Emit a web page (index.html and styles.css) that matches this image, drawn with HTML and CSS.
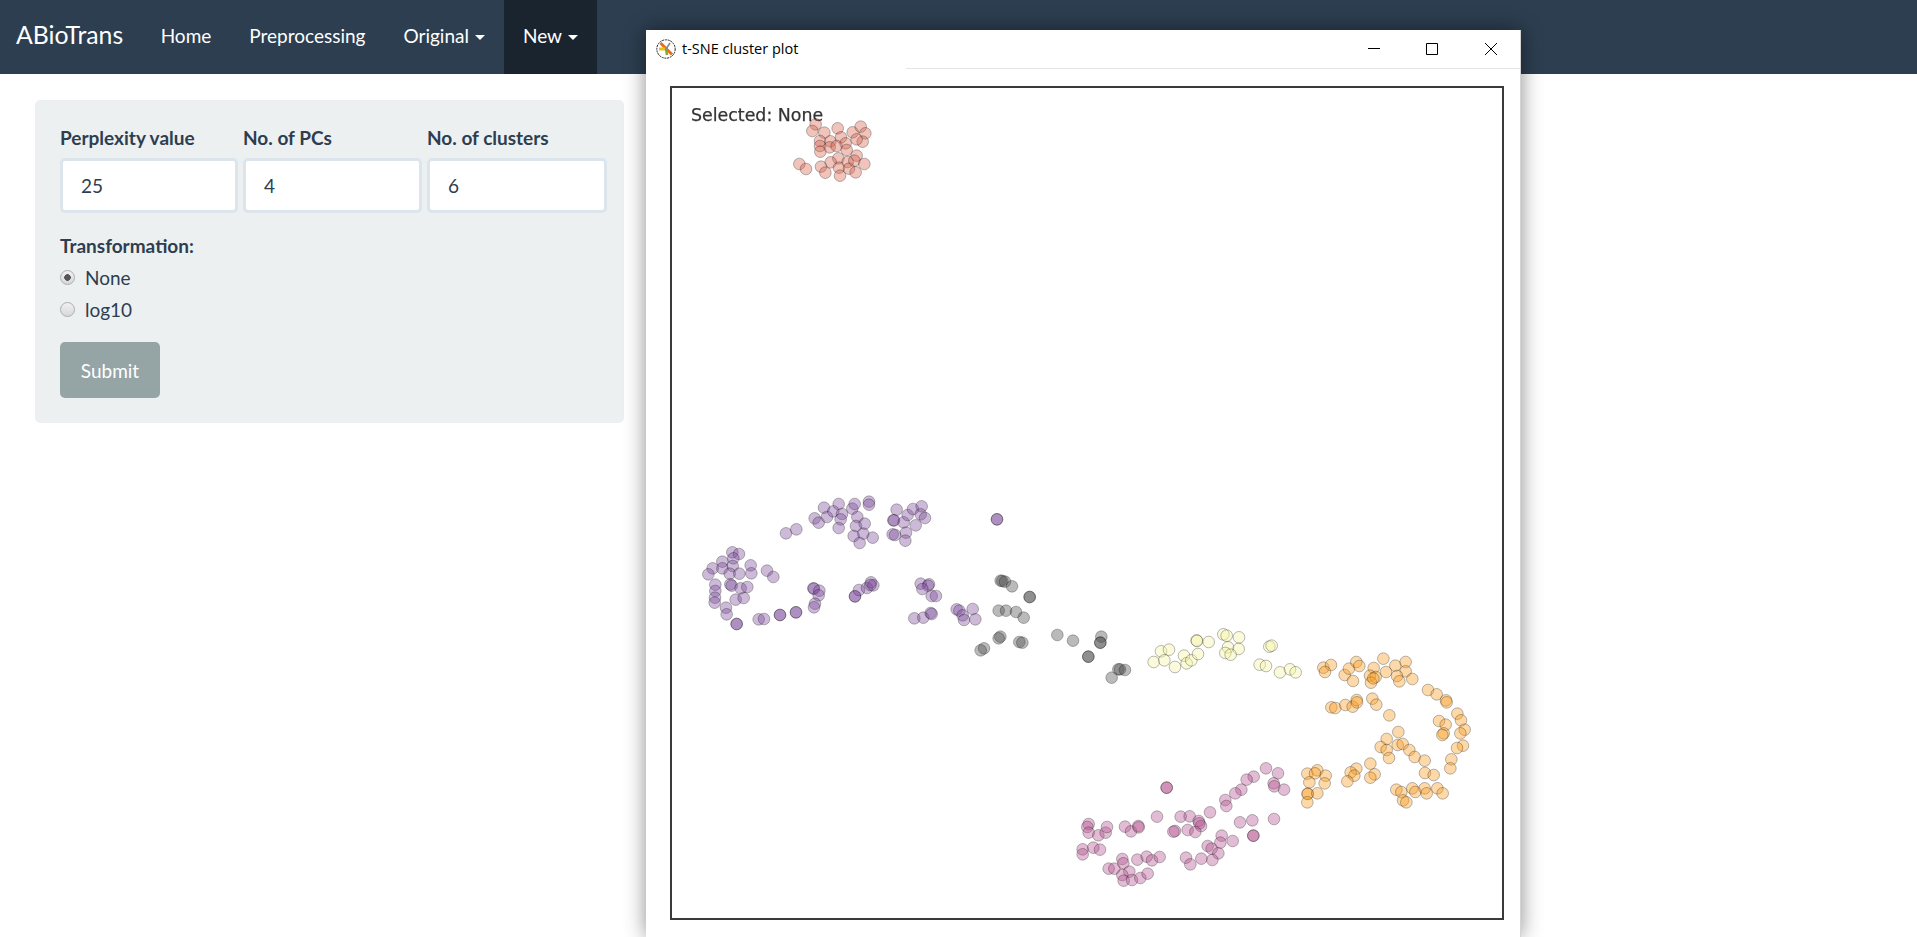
FILE: index.html
```html
<!DOCTYPE html>
<html lang="en">
<head>
<meta charset="utf-8">
<title>ABioTrans</title>
<link rel="stylesheet" href="styles.css">
</head>
<body>
<nav class="navbar">
  <a class="brand">ABioTrans</a>
  <a class="nav-item">Home</a>
  <a class="nav-item">Preprocessing</a>
  <a class="nav-item">Original<span class="caret"></span></a>
  <a class="nav-item active">New<span class="caret"></span></a>
</nav>
<main class="panel">
  <div class="fields">
    <label class="field"><span class="field-label">Perplexity value</span><input class="field-input" value="25"></label>
    <label class="field"><span class="field-label">No. of PCs</span><input class="field-input" value="4"></label>
    <label class="field"><span class="field-label">No. of clusters</span><input class="field-input" value="6"></label>
  </div>
  <div class="field-label group-title">Transformation:</div>
  <label class="radio"><input type="radio" name="t" checked>None</label>
  <label class="radio"><input type="radio" name="t">log10</label>
  <button class="submit" type="button">Submit</button>
</main>
<section class="window">
  <header class="titlebar">
    <div class="title">
      <svg class="app-icon" width="20" height="20" viewBox="0 0 20 20">
        <circle cx="10" cy="10" r="9.2" fill="#fff" stroke="#222" stroke-width="1" stroke-dasharray="2 .8"/>
        <path d="M4.5 4 10 9.5l6 6" fill="none" stroke="#e8701a" stroke-width="3"/>
        <path d="M3 10h6" stroke="#e8c020" stroke-width="3"/>
        <path d="M10 10l1 6" stroke="#7aa83c" stroke-width="2.4"/>
        <path d="M10 10l4-6" stroke="#888" stroke-width="1.6"/>
      </svg>
      <span>t-SNE cluster plot</span>
    </div>
    <div class="controls">
      <button class="ctl" type="button"><svg width="12" height="12" viewBox="0 0 12 12"><path d="M0 5.5h12" stroke="#000"/></svg></button>
      <button class="ctl" type="button"><svg width="12" height="12" viewBox="0 0 12 12"><path d="M.5.5h11v11H.5z" fill="none" stroke="#000"/></svg></button>
      <button class="ctl" type="button"><svg width="12" height="12" viewBox="0 0 12 12"><path d="M0 0l12 12M12 0 0 12" stroke="#000"/></svg></button>
    </div>
  </header>
  <div class="window-body">
    <svg class="plot" viewBox="672 88 830 830">
      <text class="selected" x="691" y="120.500">Selected: None</text>
      <g class="dots red" transform="translate(640 20) scale(.33333)">
        <circle cx="527" cy="313"/><circle cx="517" cy="333"/><circle cx="553" cy="338"/><circle cx="593" cy="325"/><circle cx="540" cy="363"/><circle cx="571" cy="364"/><circle cx="603" cy="352"/><circle cx="540" cy="378"/><circle cx="541" cy="395"/><circle cx="569" cy="382"/><circle cx="590" cy="378"/><circle cx="617" cy="370"/><circle cx="620" cy="390"/><circle cx="638" cy="337"/><circle cx="662" cy="320"/><circle cx="676" cy="340"/><circle cx="668" cy="365"/><circle cx="650" cy="358"/><circle cx="650" cy="407"/><circle cx="595" cy="415"/><circle cx="572" cy="427"/><circle cx="543" cy="440"/><circle cx="556" cy="458"/><circle cx="597" cy="443"/><circle cx="600" cy="467"/><circle cx="623" cy="426"/><circle cx="627" cy="446"/><circle cx="647" cy="457"/><circle cx="643" cy="422"/><circle cx="673" cy="432"/><circle cx="478" cy="432"/><circle cx="498" cy="447"/>
      </g>
      <g class="dots purple" transform="translate(690 490) scale(.33333)">
        <circle cx="288" cy="130"/><circle cx="319" cy="118"/><circle cx="374" cy="85"/><circle cx="386" cy="98"/><circle cx="402" cy="53"/><circle cx="411" cy="81"/><circle cx="430" cy="64"/><circle cx="446" cy="42"/><circle cx="456" cy="72"/><circle cx="452" cy="88"/><circle cx="446" cy="114"/><circle cx="487" cy="56"/><circle cx="494" cy="42"/><circle cx="537" cy="35"/><circle cx="537" cy="44"/><circle cx="502" cy="81"/><circle cx="498" cy="108"/><circle cx="524" cy="101"/><circle cx="491" cy="138"/><circle cx="520" cy="131"/><circle cx="509" cy="159"/><circle cx="548" cy="143"/><circle cx="620" cy="59"/><circle cx="610" cy="91"/><circle cx="612" cy="91"/><circle cx="641" cy="97"/><circle cx="653" cy="75"/><circle cx="669" cy="57"/><circle cx="695" cy="49"/><circle cx="692" cy="73"/><circle cx="705" cy="84"/><circle cx="677" cy="106"/><circle cx="608" cy="133"/><circle cx="615" cy="135"/><circle cx="648" cy="128"/><circle cx="646" cy="152"/>
        <circle cx="127" cy="187"/><circle cx="147" cy="192"/><circle cx="130" cy="205"/><circle cx="128" cy="228"/><circle cx="97" cy="215"/><circle cx="97" cy="235"/><circle cx="68" cy="235"/><circle cx="55" cy="253"/><circle cx="119" cy="251"/><circle cx="148" cy="251"/><circle cx="182" cy="226"/><circle cx="184" cy="250"/><circle cx="231" cy="242"/><circle cx="250" cy="261"/><circle cx="76" cy="284"/><circle cx="76" cy="303"/><circle cx="75" cy="323"/><circle cx="74" cy="338"/><circle cx="121" cy="283"/><circle cx="125" cy="287"/><circle cx="152" cy="295"/><circle cx="172" cy="291"/><circle cx="137" cy="329"/><circle cx="161" cy="324"/><circle cx="108" cy="353"/><circle cx="110" cy="373"/><circle cx="140" cy="402"/><circle cx="140" cy="402"/><circle cx="206" cy="388"/><circle cx="222" cy="387"/><circle cx="270" cy="375"/><circle cx="270" cy="375"/><circle cx="318" cy="367"/><circle cx="318" cy="367"/>
        <circle cx="370" cy="295"/><circle cx="372" cy="296"/><circle cx="388" cy="302"/><circle cx="386" cy="316"/><circle cx="375" cy="341"/><circle cx="372" cy="352"/><circle cx="495" cy="319"/><circle cx="495" cy="319"/><circle cx="507" cy="300"/><circle cx="531" cy="294"/><circle cx="543" cy="277"/><circle cx="550" cy="286"/><circle cx="541" cy="285"/>
        <circle cx="692" cy="281"/><circle cx="717" cy="283"/><circle cx="714" cy="287"/><circle cx="697" cy="297"/><circle cx="725" cy="318"/><circle cx="738" cy="318"/><circle cx="673" cy="385"/><circle cx="700" cy="383"/><circle cx="722" cy="369"/><circle cx="725" cy="372"/><circle cx="800" cy="358"/><circle cx="808" cy="362"/><circle cx="848" cy="357"/><circle cx="818" cy="376"/><circle cx="822" cy="390"/><circle cx="856" cy="388"/><circle cx="921" cy="88"/><circle cx="921" cy="88"/>
      </g>
      <g class="dots gray" transform="translate(960 490) scale(.33333)">
        <circle cx="122" cy="272"/><circle cx="127" cy="273"/><circle cx="135" cy="275"/><circle cx="156" cy="289"/><circle cx="209" cy="321"/><circle cx="209" cy="321"/><circle cx="116" cy="362"/><circle cx="138" cy="362"/><circle cx="168" cy="366"/><circle cx="191" cy="383"/><circle cx="121" cy="440"/><circle cx="116" cy="445"/><circle cx="72" cy="475"/><circle cx="62" cy="481"/><circle cx="178" cy="456"/><circle cx="187" cy="458"/><circle cx="292" cy="435"/><circle cx="339" cy="452"/><circle cx="424" cy="440"/><circle cx="421" cy="458"/><circle cx="421" cy="458"/><circle cx="385" cy="500"/><circle cx="385" cy="500"/><circle cx="475" cy="538"/><circle cx="480" cy="538"/><circle cx="495" cy="540"/><circle cx="455" cy="563"/>
      </g>
      <g class="dots yellow" transform="translate(960 490) scale(.33333)">
        <circle cx="581" cy="516"/><circle cx="603" cy="484"/><circle cx="627" cy="479"/><circle cx="613" cy="511"/><circle cx="645" cy="531"/><circle cx="672" cy="497"/><circle cx="680" cy="520"/><circle cx="694" cy="511"/><circle cx="714" cy="492"/><circle cx="710" cy="451"/><circle cx="711" cy="453"/><circle cx="746" cy="456"/><circle cx="790" cy="433"/><circle cx="800" cy="437"/><circle cx="837" cy="442"/><circle cx="804" cy="472"/><circle cx="836" cy="477"/><circle cx="796" cy="489"/><circle cx="812" cy="494"/><circle cx="928" cy="470"/><circle cx="935" cy="467"/><circle cx="899" cy="524"/><circle cx="918" cy="528"/><circle cx="960" cy="547"/><circle cx="990" cy="538"/><circle cx="1007" cy="547"/>
      </g>
      <g class="dots orange" transform="translate(1230 620) scale(.33333)">
        <circle cx="280" cy="143"/><circle cx="303" cy="135"/><circle cx="285" cy="156"/><circle cx="344" cy="165"/><circle cx="357" cy="146"/><circle cx="379" cy="126"/><circle cx="388" cy="138"/><circle cx="369" cy="183"/><circle cx="431" cy="144"/><circle cx="420" cy="167"/><circle cx="437" cy="171"/><circle cx="423" cy="188"/><circle cx="430" cy="175"/><circle cx="460" cy="116"/><circle cx="468" cy="156"/><circle cx="496" cy="137"/><circle cx="527" cy="126"/><circle cx="527" cy="154"/><circle cx="501" cy="168"/><circle cx="508" cy="184"/><circle cx="547" cy="177"/><circle cx="594" cy="210"/><circle cx="620" cy="223"/><circle cx="648" cy="241"/><circle cx="650" cy="247"/><circle cx="682" cy="281"/><circle cx="693" cy="301"/><circle cx="704" cy="329"/><circle cx="691" cy="340"/><circle cx="627" cy="303"/><circle cx="647" cy="314"/><circle cx="641" cy="340"/><circle cx="637" cy="345"/><circle cx="699" cy="377"/><circle cx="681" cy="384"/><circle cx="664" cy="418"/><circle cx="661" cy="445"/>
        <circle cx="304" cy="262"/><circle cx="316" cy="264"/><circle cx="346" cy="255"/><circle cx="368" cy="260"/><circle cx="380" cy="240"/><circle cx="381" cy="247"/><circle cx="427" cy="236"/><circle cx="439" cy="254"/><circle cx="478" cy="286"/><circle cx="505" cy="336"/><circle cx="470" cy="357"/><circle cx="452" cy="381"/><circle cx="470" cy="390"/><circle cx="477" cy="414"/><circle cx="503" cy="375"/><circle cx="518" cy="372"/><circle cx="538" cy="390"/><circle cx="554" cy="411"/><circle cx="584" cy="422"/><circle cx="585" cy="459"/><circle cx="611" cy="465"/>
        <circle cx="421" cy="431"/><circle cx="434" cy="463"/><circle cx="421" cy="473"/><circle cx="379" cy="446"/><circle cx="362" cy="457"/><circle cx="373" cy="467"/><circle cx="352" cy="484"/><circle cx="499" cy="509"/><circle cx="514" cy="516"/><circle cx="519" cy="541"/><circle cx="529" cy="547"/><circle cx="547" cy="505"/><circle cx="556" cy="516"/><circle cx="584" cy="505"/><circle cx="590" cy="520"/><circle cx="622" cy="505"/><circle cx="638" cy="520"/><circle cx="232" cy="461"/><circle cx="262" cy="451"/><circle cx="255" cy="460"/><circle cx="287" cy="467"/><circle cx="284" cy="490"/><circle cx="238" cy="487"/><circle cx="233" cy="521"/><circle cx="233" cy="522"/><circle cx="262" cy="520"/><circle cx="232" cy="547"/>
      </g>
      <g class="dots mauve" transform="translate(1060 760) scale(.33333)">
        <circle cx="618" cy="25"/><circle cx="654" cy="40"/><circle cx="581" cy="50"/><circle cx="560" cy="59"/><circle cx="641" cy="70"/><circle cx="643" cy="79"/><circle cx="672" cy="89"/><circle cx="544" cy="89"/><circle cx="526" cy="100"/><circle cx="496" cy="120"/><circle cx="499" cy="138"/><circle cx="450" cy="157"/><circle cx="291" cy="170"/><circle cx="362" cy="170"/><circle cx="389" cy="169"/><circle cx="416" cy="183"/><circle cx="423" cy="198"/><circle cx="418" cy="190"/><circle cx="345" cy="213"/><circle cx="340" cy="215"/><circle cx="383" cy="210"/><circle cx="406" cy="216"/><circle cx="540" cy="187"/><circle cx="577" cy="181"/><circle cx="642" cy="177"/><circle cx="320" cy="83"/><circle cx="320" cy="83"/><circle cx="580" cy="227"/><circle cx="580" cy="227"/>
        <circle cx="485" cy="227"/><circle cx="481" cy="248"/><circle cx="518" cy="243"/><circle cx="443" cy="258"/><circle cx="455" cy="266"/><circle cx="475" cy="280"/><circle cx="457" cy="300"/><circle cx="424" cy="296"/><circle cx="378" cy="293"/><circle cx="391" cy="313"/><circle cx="86" cy="192"/><circle cx="82" cy="201"/><circle cx="86" cy="218"/><circle cx="115" cy="226"/><circle cx="137" cy="218"/><circle cx="141" cy="201"/><circle cx="195" cy="200"/><circle cx="213" cy="214"/><circle cx="235" cy="198"/><circle cx="236" cy="202"/><circle cx="68" cy="268"/><circle cx="68" cy="283"/><circle cx="100" cy="263"/><circle cx="120" cy="269"/>
        <circle cx="187" cy="297"/><circle cx="190" cy="310"/><circle cx="232" cy="299"/><circle cx="260" cy="290"/><circle cx="276" cy="301"/><circle cx="299" cy="291"/><circle cx="146" cy="326"/><circle cx="163" cy="326"/><circle cx="208" cy="335"/><circle cx="187" cy="345"/><circle cx="191" cy="362"/><circle cx="216" cy="360"/><circle cx="241" cy="354"/><circle cx="263" cy="341"/>
      </g>
    </svg>
  </div>
</section>
</body>
</html>
```

FILE: styles.css
```css
* { box-sizing: border-box; }

html, body { height: 100%; }

body {
  margin: 0;
  position: relative;
  overflow: hidden;
  background: #fff;
  color: #2c3e50;
  font-family: Lato, "Liberation Sans", sans-serif;
  font-size: 19px;
}

.navbar {
  display: flex;
  align-items: stretch;
  height: 74px;
  padding-left: 16px;
  background: #2c3e50;
  color: #fff;
}

.brand {
  display: flex;
  align-items: center;
  margin-right: 18.500px;
  padding-bottom: 5px;
  font-size: 24.800px;
}

.nav-item {
  display: flex;
  align-items: center;
  gap: 6px;
  padding: 0 19px 3px;
}

.nav-item.active { background: #1a242f; }

.caret {
  width: 0;
  height: 0;
  margin-top: 4px;
  border-top: 5px solid #fff;
  border-left: 5px solid transparent;
  border-right: 5px solid transparent;
}

.panel {
  width: 589px;
  height: 323px;
  margin: 26px 0 0 35px;
  padding: 25px 17px 0 25px;
  background: #ecf0f1;
  border-radius: 5px;
}

.fields {
  display: grid;
  grid-template-columns: 178px 179px 180px;
  column-gap: 5px;
}

.field { display: block; }

.field-label {
  display: block;
  line-height: 26px;
  font-weight: 700;
}

.field-input {
  display: block;
  width: 100%;
  height: 55px;
  margin-top: 7px;
  padding: 0 18px;
  border: 3px solid #dce4ec;
  border-radius: 5px;
  background: #fff;
  color: #2c3e50;
  font: inherit;
  outline: none;
}

.group-title { margin-top: 20px; }

.radio {
  display: flex;
  align-items: center;
  gap: 10px;
  height: 32px;
}

.radio:first-of-type { margin-top: 2px; }

.radio input {
  appearance: none;
  width: 15px;
  height: 15px;
  margin: 0;
  border: 1px solid #a9b0b2;
  border-radius: 50%;
  background: linear-gradient(#f0f0f0, #d8d8d8);
}

.radio input:checked {
  background: radial-gradient(circle, #555 0 3px, transparent 3.600px), linear-gradient(#f0f0f0, #d8d8d8);
}

.submit {
  display: block;
  width: 100%;
  max-width: 100px;
  height: 56px;
  margin-top: 17px;
  border: 0;
  border-radius: 5px;
  background: #95a5a6;
  color: #fff;
  font: inherit;
}

.window {
  position: absolute;
  top: 30px;
  bottom: 0;
  left: 646px;
  width: 875px;
  background: #fff;
  border-right: 1px solid #d4d4d4;
  box-shadow: 0 0 20px rgba(0, 0, 0, .45);
  font-family: "Open Sans", "Noto Sans", sans-serif;
}

.titlebar {
  display: flex;
  height: 39px;
}

.title {
  display: flex;
  align-items: center;
  gap: 6px;
  width: 260px;
  padding: 0 0 2px 10px;
  color: #000;
  font-size: 14.500px;
}

.controls {
  display: flex;
  justify-content: flex-end;
  flex: 1;
  border-bottom: 1px solid #e5e5e5;
}

.ctl {
  display: flex;
  align-items: center;
  justify-content: center;
  width: 58.500px;
  padding: 0 0 1px;
  border: 0;
  background: none;
}

.window-body { padding: 17px 0 0 24px; }

.plot {
  display: block;
  width: 834px;
  height: 834px;
  border: 2px solid #3a3a3a;
}

.selected {
  fill: #333;
  stroke: #333;
  stroke-width: .25px;
  font-family: "DejaVu Sans", sans-serif;
  font-size: 17.400px;
  filter: blur(.3px);
}

.dots {
  filter: blur(.6px);
  stroke: #000;
  stroke-opacity: .28;
  stroke-width: 3;
  fill-opacity: .38;
}

.dots circle { r: 17.500px; }

.red { fill: #d8604d; }
.purple { fill: #7b4a9a; }
.gray { fill: #4a4a4a; }
.yellow { fill: #f5f5a0; }
.orange { fill: #fa9b1e; }
.mauve { fill: #b4508e; }
```
